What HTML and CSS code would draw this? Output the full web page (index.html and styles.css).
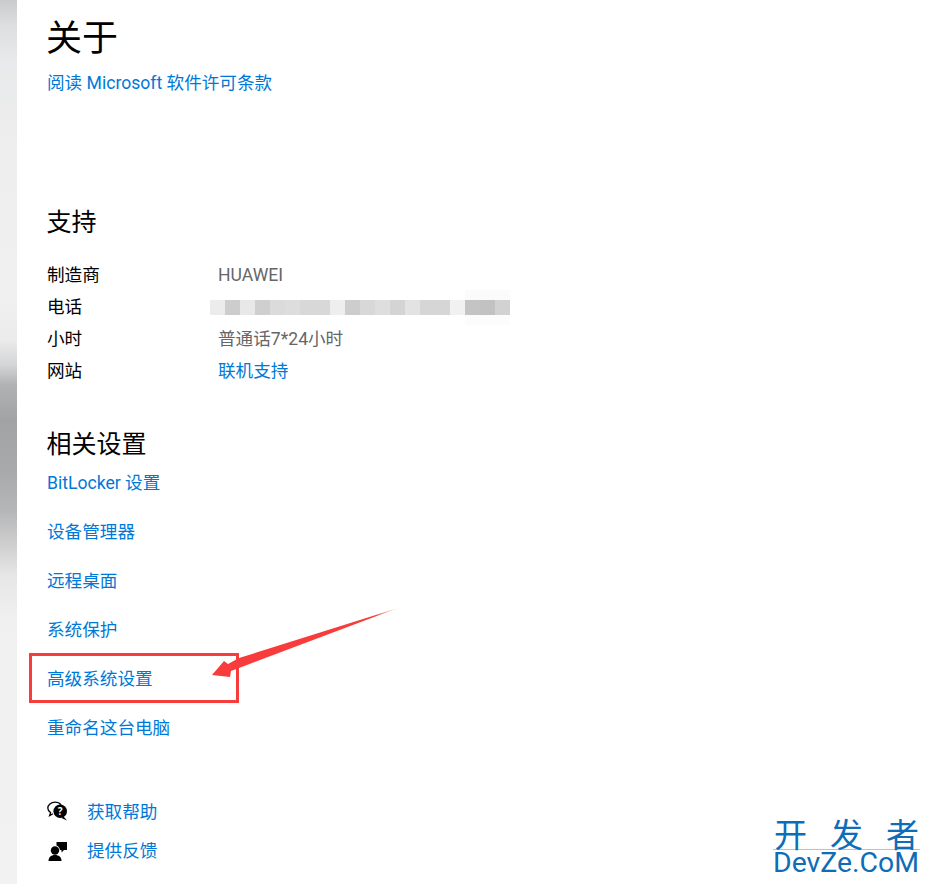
FILE: index.html
```html
<!DOCTYPE html>
<html lang="zh-CN">
<head>
<meta charset="utf-8">
<title>关于</title>
<link rel="stylesheet" href="styles.css">
</head>
<body>
<div class="page">
  <div class="strip"></div>
  <main class="main">
    <h1 class="title">关于</h1>
    <a class="link license">阅读 Microsoft 软件许可条款</a>

    <h2 class="subtitle support-title">支持</h2>
    <dl class="info">
      <dt>制造商</dt><dd class="muted">HUAWEI</dd>
      <dt>电话</dt>
      <dd class="blur-cell">
        <div class="blur">
          <i style="background:#ececec"></i><i style="background:#cdcdcd"></i><i style="background:#e8e8e8"></i><i style="background:#cfcfcf"></i><i style="background:#dbdbdb"></i><i style="background:#dddddd"></i><i style="background:#d8d8d8"></i><i style="background:#d8d8d8"></i><i style="background:#eeeeee"></i><i style="background:#cdcdcd"></i><i style="background:#d8d8d8"></i><i style="background:#dedede"></i><i style="background:#d4d4d4"></i><i style="background:#e3e3e3"></i><i style="background:#d6d6d6"></i><i style="background:#d6d6d6"></i><i style="background:#f1f1f1"></i><i style="background:#c4c4c4"></i><i style="background:#c2c2c2"></i><i style="background:#d2d2d2"></i>
        </div>
      </dd>
      <dt>小时</dt><dd class="muted">普通话7*24小时</dd>
      <dt>网站</dt><dd><a class="link">联机支持</a></dd>
    </dl>

    <h2 class="subtitle related-title">相关设置</h2>
    <ul class="related">
      <li><a class="link">BitLocker 设置</a></li>
      <li><a class="link">设备管理器</a></li>
      <li><a class="link">远程桌面</a></li>
      <li><a class="link">系统保护</a></li>
      <li class="boxed"><a class="link">高级系统设置</a></li>
      <li><a class="link">重命名这台电脑</a></li>
    </ul>

    <ul class="help">
      <li>
        <svg class="icon" viewBox="0 0 22 22" aria-hidden="true">
          <path d="M8 1.200C4 1.200.8 3.800.8 7c0 1.900 1.100 3.500 2.800 4.600L2.600 14.600l3.400-1.900" fill="none" stroke="#000" stroke-width="1.300"/>
          <path d="M8 1.200c2.500 0 4.700 1 6 2.600" fill="none" stroke="#000" stroke-width="1.300"/>
          <circle cx="13.200" cy="10.300" r="6.800" fill="#000"/>
          <path d="M16.500 15.500l3.500 4-5.500-2.500z" fill="#000"/>
          <text x="13.200" y="13.800" class="qmark">?</text>
        </svg>
        <a class="link">获取帮助</a>
      </li>
      <li>
        <svg class="icon" viewBox="0 0 22 22" aria-hidden="true">
          <circle cx="8" cy="10.500" r="4.200" fill="#000"/>
          <path d="M1.500 21c0-4 2.800-6 6.500-6s6.500 2 6.500 6z" fill="#000"/>
          <path d="M9.500 2h10.500v8h-3l-2.500 2.500V10h-1.500c-.5-2.500-2-4-3.500-4.500z" fill="#000"/>
        </svg>
        <a class="link">提供反馈</a>
      </li>
    </ul>
  </main>

  <svg class="arrow" viewBox="0 0 190 80" aria-hidden="true">
    <defs>
      <linearGradient id="fade" x1="0" y1="1" x2="1" y2="0">
        <stop offset="0" stop-color="#f83b3b"/>
        <stop offset=".88" stop-color="#f83b3b"/>
        <stop offset="1" stop-color="#f83b3b" stop-opacity=".2"/>
      </linearGradient>
    </defs>
    <path d="M188 1 L29 61 L21 64 L20 70 L2 68 L14 54 L18 57 L29 51 Z" fill="url(#fade)"/>
  </svg>

  <div class="watermark">
    <div class="wm-cn"><span>开</span><span>发</span><span>者</span></div>
    <div class="wm-en">DevZe.CoM</div>
  </div>
</div>
</body>
</html>
```
FILE: styles.css
```css
*, *::before, *::after { box-sizing: border-box; }
html, body { margin: 0; padding: 0; background: #fff; }
body { font-family: Roboto, "Noto Sans CJK SC", sans-serif; }
.page { position: relative; width: 930px; height: 884px; overflow: hidden; display: flex; }
.strip {
  flex: 0 0 17px;
  background: linear-gradient(to bottom,
    #c9cbcc 0, #dcdedf 25px, #e8e9ea 60px, #eeeeee 150px, #f0f0f0 300px, #ebebeb 340px,
    #d4d5d6 365px, #b0b2b3 385px, #a1a3a4 420px, #a7a9aa 470px, #b5b6b7 510px, #cfcfd0 545px,
    #e6e6e6 575px, #f0f0f0 620px, #f2f2f2 884px);
}
.main { flex: 1; padding-left: 30px; min-width: 0; }
.title { margin: 12px 0 0 -1px; height: 47px; font: 400 36px/47px "Noto Sans CJK SC", sans-serif; color: #000; }
.link { color: #0078d7; font-size: 17.6px; line-height: 24px; }
.license { display: block; margin-top: 12px; height: 24px; }
.subtitle { margin: 0 0 0 -0.5px; font: 400 25px/34px "Noto Sans CJK SC", sans-serif; color: #000; }
.support-title { margin-top: 108px; }
.info {
  margin: 22px 0 0;
  display: grid;
  grid-template-columns: 171px 1fr;
  grid-auto-rows: 32px;
  font-size: 17.6px;
  line-height: 32px;
  color: #000;
}
.info dt, .info dd { margin: 0; }
.muted { color: #666; }
.blur-cell { display: flex; align-items: center; margin-left: -8px !important; }
.blur { position: relative; display: flex; height: 15px; }
.blur::after {
  content: "";
  position: absolute;
  right: 0; top: -10px;
  width: 45px; height: 35px;
  background: linear-gradient(to bottom, #fbfbfb 0, #fbfbfb 10px, transparent 10px, transparent 25px, #fcfcfc 25px, #fcfcfc 100%);
}
.blur i { display: block; width: 15px; }
.related-title { margin-top: 38px; }
.related { list-style: none; margin: 12px 0 0; padding: 0; display: flex; flex-direction: column; row-gap: 25px; }
.related li { height: 24px; }
.boxed { position: relative; }
.boxed::before {
  content: "";
  position: absolute;
  left: -18px; top: -14px;
  width: 210px; height: 50px;
  border: 3px solid #f83b3b;
}
.help { list-style: none; margin: 60px 0 0; padding: 0; display: flex; flex-direction: column; row-gap: 15px; }
.help li { display: flex; align-items: center; height: 24px; }
.icon { width: 22px; height: 22px; margin-right: 18px; flex: none; }
.qmark { font: 700 10px "Open Sans", sans-serif; fill: #fff; text-anchor: middle; }
.arrow { position: absolute; left: 210px; top: 607px; width: 190px; height: 80px; }
.watermark { position: absolute; left: 773px; top: 819px; width: 147px; color: #0f6cb6; }
.wm-cn { display: flex; justify-content: space-between; height: 31px; padding: 0 1px; font: 400 33px/29px "Noto Sans CJK SC", sans-serif; border-bottom: 1px solid #8fd0ee; }
.wm-en { font: 400 28.4px/26px Roboto, sans-serif; white-space: nowrap; }
```
